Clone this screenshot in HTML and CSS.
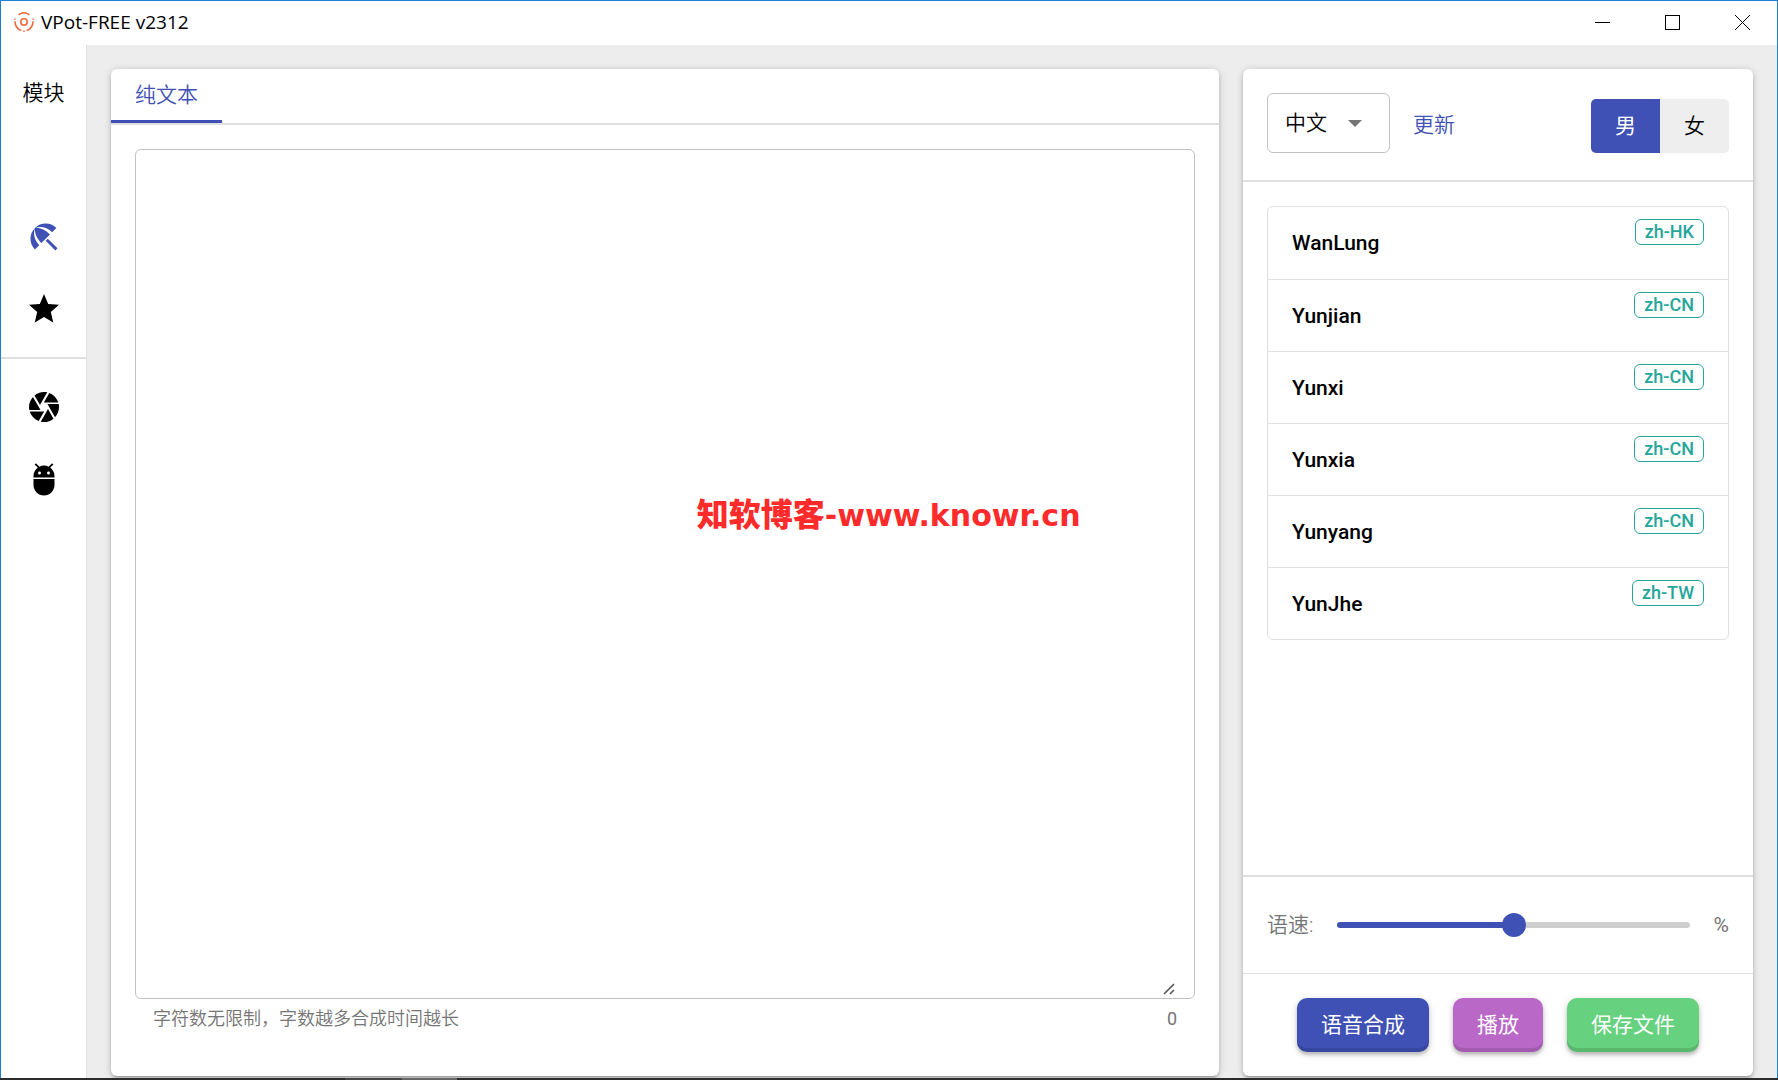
FILE: index.html
```html
<!DOCTYPE html>
<html lang="zh-CN">
<head>
  <meta charset="utf-8">
  <title>VPot-FREE v2312</title>
  <link rel="stylesheet" href="styles.css">
</head>
<body>
  <div class="window">
    <header class="titlebar">
      <svg class="logo" viewBox="0 0 20 20" aria-hidden="true">
        <circle cx="10" cy="10" r="3.2"/>
        <path d="M4.6 2.8A9 9 0 0 1 15.4 2.8M18.9 9.2A9 9 0 0 1 12.6 18.6M1.1 9.2A9 9 0 0 0 7.4 18.6"/>
        <path d="M.9 6.4v1.4M19.1 6.4v1.4M9.3 19.2h1.4"/>
      </svg>
      <h1 class="title">VPot-FREE v2312</h1>
      <div class="window-controls">
        <button class="window-button" type="button" aria-label="最小化">
          <svg viewBox="0 0 15 15"><path d="M0 7.5h15" shape-rendering="crispEdges"/></svg>
        </button>
        <button class="window-button" type="button" aria-label="最大化">
          <svg viewBox="0 0 15 15"><path d="M.5 .5h14v14h-14z" shape-rendering="crispEdges"/></svg>
        </button>
        <button class="window-button" type="button" aria-label="关闭">
          <svg viewBox="0 0 15 15"><path d="M0 0l15 15M15 0L0 15"/></svg>
        </button>
      </div>
    </header>

    <div class="body">
      <nav class="sidebar" aria-label="模块">
        <p class="sidebar-title">模块</p>
        <div class="nav-group">
          <button class="nav-item nav-item-active" type="button" aria-label="文本">
            <svg viewBox="0 0 24 24"><path d="M13.127 14.56l1.43-1.43 6.44 6.443L19.57 21zm4.293-5.73l2.86-2.86c-3.95-3.95-10.35-3.96-14.3-.02 3.93-1.3 8.31-.25 11.44 2.88zM5.95 5.98c-3.94 3.95-3.93 10.35.02 14.3l2.86-2.86C5.7 14.29 4.65 9.91 5.95 5.98zm.02-.02l-.01.01c-.38 3.01 1.17 6.88 4.3 10.02l5.73-5.73c-3.13-3.13-7.01-4.68-10.02-4.3z"/></svg>
          </button>
          <button class="nav-item" type="button" aria-label="收藏">
            <svg viewBox="0 0 24 24"><path d="M12 17.27L18.18 21l-1.64-7.03L22 9.24l-7.19-.61L12 2 9.19 8.63 2 9.24l5.46 4.73L5.82 21z"/></svg>
          </button>
        </div>
        <div class="nav-group nav-group-ruled">
          <button class="nav-item" type="button" aria-label="相机">
            <svg viewBox="0 0 24 24"><path d="M9.4 10.5l4.77-8.26C13.47 2.09 12.75 2 12 2c-2.4 0-4.6.85-6.32 2.25l3.66 6.35.06-.1zM21.54 9c-.92-2.92-3.15-5.26-6-6.34L11.88 9h9.66zm.26 1h-7.49l.29.5 4.76 8.25C21 16.97 22 14.61 22 12c0-.69-.07-1.35-.2-2zM8.54 12l-3.9-6.75C3.01 7.03 2 9.39 2 12c0 .69.07 1.35.2 2h7.49l-1.15-2zm-6.08 3c.92 2.92 3.15 5.26 6 6.34L12.12 15H2.46zm11.27 0l-3.9 6.76c.7.15 1.42.24 2.17.24 2.4 0 4.6-.85 6.32-2.25l-3.66-6.35-.93 1.6z"/></svg>
          </button>
          <button class="nav-item" type="button" aria-label="调试">
            <svg viewBox="0 0 24 24"><path d="M5 16c0 3.87 3.13 7 7 7s7-3.13 7-7v-4H5v4zM16.12 4.37l2.1-2.1-.82-.83-2.3 2.31C14.16 3.28 13.12 3 12 3s-2.16.28-3.09.75L6.6 1.44l-.82.83 2.1 2.1C6.14 5.64 5 7.68 5 10v1h14v-1c0-2.32-1.14-4.36-2.88-5.63zM9 9c-.55 0-1-.45-1-1s.45-1 1-1 1 .45 1 1-.45 1-1 1zm6 0c-.55 0-1-.45-1-1s.45-1 1-1 1 .45 1 1-.45 1-1 1z"/></svg>
          </button>
        </div>
      </nav>

      <main class="content">
        <section class="card">
          <div class="tabs" role="tablist">
            <button class="tab" type="button" role="tab" aria-selected="true">纯文本</button>
          </div>
          <div class="tab-panel" role="tabpanel">
            <div class="editor">
              <textarea class="editor-input" aria-label="纯文本" aria-describedby="editor-hint"></textarea>
              <div class="watermark"><span class="watermark-name">知软博客</span>-www.knowr.cn</div>
            </div>
            <div class="editor-footer">
              <span id="editor-hint">字符数无限制，字数越多合成时间越长</span>
              <span>0</span>
            </div>
          </div>
        </section>

        <section class="card">
          <div class="voice-header">
            <div class="select-field">
              <select class="language" aria-label="语言">
                <option>中文</option>
              </select>
              <svg class="select-arrow" viewBox="0 0 14 7" aria-hidden="true"><path d="M0 0h14L7 7z"/></svg>
            </div>
            <button class="refresh" type="button">更新</button>
            <div class="gender" role="group" aria-label="性别">
              <button class="gender-button gender-button-active" type="button" aria-pressed="true">男</button>
              <button class="gender-button" type="button" aria-pressed="false">女</button>
            </div>
          </div>

          <div class="voice-body">
            <ul class="voices">
              <li class="voice"><span class="voice-name">WanLung</span><span class="badge">zh-HK</span></li>
              <li class="voice"><span class="voice-name">Yunjian</span><span class="badge">zh-CN</span></li>
              <li class="voice"><span class="voice-name">Yunxi</span><span class="badge">zh-CN</span></li>
              <li class="voice"><span class="voice-name">Yunxia</span><span class="badge">zh-CN</span></li>
              <li class="voice"><span class="voice-name">Yunyang</span><span class="badge">zh-CN</span></li>
              <li class="voice"><span class="voice-name">YunJhe</span><span class="badge">zh-TW</span></li>
            </ul>
          </div>

          <div class="speed">
            <label for="speed">语速:</label>
            <input class="slider" id="speed" type="range" min="-100" max="100" value="0">
            <span>%</span>
          </div>

          <div class="actions">
            <button class="action action-primary" type="button">语音合成</button>
            <button class="action action-play" type="button">播放</button>
            <button class="action action-save" type="button">保存文件</button>
          </div>
        </section>
      </main>
    </div>
  </div>
  <div class="taskbar"></div>
</body>
</html>
```

FILE: styles.css
```css
:root {
  --primary: #3f51b5;
  --teal: #26a69a;
  --line: #e0e0e0;
  --muted: #757575;
  --surface: #ededed;
  --space: 24px;
}

* {
  box-sizing: border-box;
}

body {
  display: flex;
  flex-direction: column;
  height: 100vh;
  margin: 0;
  color: #000;
  font: 350 21px/32px Roboto, "Noto Sans CJK SC", sans-serif;
}

button,
select,
textarea {
  margin: 0;
  padding: 0;
  border: 0;
  background: none;
  color: inherit;
  font: inherit;
}

.window {
  display: flex;
  flex: 1;
  flex-direction: column;
  min-height: 0;
  border: 1px solid #1a80d9;
  border-bottom: 0;
  background: #fff;
}

.taskbar {
  flex: none;
  height: 2px;
  background: linear-gradient(90deg, #2b2b2b 345px, #444 345px 402px, #666 402px 457px, #2b2b2b 457px);
}

/* Title bar */

.titlebar {
  display: flex;
  flex: none;
  align-items: center;
  height: 44px;
  padding: 0 0 2px 13px;
}

.logo {
  width: 20px;
  height: 20px;
  fill: none;
  stroke: #f4683c;
  stroke-width: 1.6;
}

.title {
  margin: 0 0 0 7px;
  font: 400 19px/24px "Open Sans", "Noto Sans", sans-serif;
}

.window-controls {
  display: flex;
  margin-left: auto;
}

.window-button {
  display: grid;
  place-items: center;
  width: 70px;
  height: 42px;
}

.window-button svg {
  width: 15px;
  height: 15px;
  fill: none;
  stroke: #000;
}

/* Sidebar */

.body {
  display: flex;
  flex: 1;
  min-height: 0;
}

.sidebar {
  flex: none;
  width: 86px;
  border-right: 1px solid var(--line);
}

.sidebar-title {
  height: 144px;
  margin: 0;
  padding-top: 32px;
  text-align: center;
}

.nav-group {
  padding: 12px 0;
}

.nav-group-ruled {
  border-top: 2px solid var(--line);
}

.nav-item {
  display: grid;
  place-items: center;
  width: 100%;
  height: 72px;
}

.nav-item svg {
  width: 36px;
  height: 36px;
  fill: currentColor;
}

.nav-item-active {
  color: var(--primary);
}

/* Cards */

.content {
  display: grid;
  flex: 1;
  grid-template-columns: minmax(0, 1108fr) minmax(0, 510fr);
  gap: var(--space);
  padding: var(--space) var(--space) 2px;
  overflow: hidden;
  background: var(--surface);
}

.card {
  display: flex;
  flex-direction: column;
  min-height: 0;
  border-radius: 6px;
  background: #fff;
  box-shadow: 0 1px 7px rgba(0, 0, 0, .2), 0 3px 3px rgba(0, 0, 0, .14), 0 4px 1px -3px rgba(0, 0, 0, .12);
}

.tabs {
  display: flex;
  border-bottom: 2px solid var(--line);
}

.tab {
  height: 54px;
  padding: 0 var(--space);
  border-bottom: 3px solid var(--primary);
  color: var(--primary);
}

.tab-panel {
  display: flex;
  flex: 1;
  flex-direction: column;
  min-height: 0;
  padding: var(--space) var(--space) 45px;
}

.editor {
  position: relative;
  display: flex;
  flex: 1;
  min-height: 0;
  padding: 3px 18px;
  border: 1px solid #c2c2c2;
  border-radius: 6px;
}

.editor-input {
  flex: 1;
  height: 100%;
  outline: 0;
  resize: vertical;
}

.editor-input::-webkit-resizer {
  background: url("data:image/svg+xml,%3Csvg xmlns='http://www.w3.org/2000/svg' width='15' height='15'%3E%3Cpath d='M3 14L13 4M9 14l4-4' stroke='%23555' stroke-width='1.6'/%3E%3C/svg%3E") no-repeat;
}

.watermark {
  position: absolute;
  top: 41%;
  left: 53%;
  color: #ff2a2a;
  font: 700 30px/28px "DejaVu Sans", sans-serif;
  white-space: nowrap;
}

.watermark-name {
  font: 900 32px/28px "Noto Sans CJK SC", sans-serif;
}

.editor-footer {
  display: flex;
  justify-content: space-between;
  padding: 8px 18px 0;
  color: var(--muted);
  font-size: 18px;
  line-height: 24px;
}

.editor-footer span:last-child {
  font-weight: 400;
}

/* Voice panel */

.voice-header {
  display: flex;
  align-items: flex-end;
  padding: var(--space) var(--space) 27px;
  border-bottom: 2px solid var(--line);
}

.select-field {
  display: grid;
  align-items: center;
  width: 123px;
}

.language {
  grid-area: 1 / 1;
  width: 100%;
  height: 60px;
  padding: 0 17px;
  border: 1px solid #c2c2c2;
  border-radius: 6px;
  appearance: none;
}

.select-arrow {
  grid-area: 1 / 1;
  justify-self: end;
  width: 14px;
  height: 7px;
  margin-right: 28px;
  fill: var(--muted);
  pointer-events: none;
}

.refresh {
  height: 56px;
  margin-left: 23px;
  color: var(--primary);
}

.gender {
  display: flex;
  margin-left: auto;
  overflow: hidden;
  border-radius: 5px;
  background: #eee;
}

.gender-button {
  width: 69px;
  height: 54px;
}

.gender-button-active {
  background: var(--primary);
  color: #fff;
  font-weight: 400;
}

.voice-body {
  flex: 1;
  min-height: 0;
  padding: var(--space);
  overflow: auto;
}

.voices {
  margin: 0;
  padding: 0;
  border: 1px solid var(--line);
  border-radius: 6px;
  list-style: none;
}

.voice {
  display: flex;
  align-items: flex-start;
  justify-content: space-between;
  height: 72px;
  padding: 12px var(--space);
}

.voice + .voice {
  border-top: 1px solid var(--line);
}

.voice-name {
  align-self: center;
  font-weight: 500;
}

.badge {
  height: 26px;
  padding: 0 9px;
  border: 1px solid var(--teal);
  border-radius: 6px;
  color: var(--teal);
  font-size: 18px;
  font-weight: 500;
  line-height: 24px;
}

.speed {
  display: flex;
  align-items: center;
  gap: var(--space);
  height: 98px;
  padding: 0 var(--space);
  border-top: 2px solid var(--line);
  color: var(--muted);
}

.speed span {
  font-weight: 400;
}

.slider {
  flex: 1;
  min-width: 0;
  height: 24px;
  margin: 0;
  background: none;
  appearance: none;
}

.slider::-webkit-slider-runnable-track {
  height: 6px;
  border-radius: 3px;
  background: linear-gradient(90deg, var(--primary) 50%, #cecece 50%);
}

.slider::-webkit-slider-thumb {
  width: 24px;
  height: 24px;
  margin-top: -9px;
  border-radius: 50%;
  background: var(--primary);
  appearance: none;
}

.actions {
  display: flex;
  justify-content: center;
  gap: var(--space);
  padding: var(--space);
  border-top: 1px solid var(--line);
}

.action {
  height: 54px;
  padding: 0 var(--space);
  border-radius: 10px;
  color: #fff;
  font-weight: 400;
  box-shadow: inset 0 -4px rgba(0, 0, 0, .12), 0 2px 7px rgba(0, 0, 0, .2), 0 3px 3px rgba(0, 0, 0, .14);
}

.action-primary {
  background-color: var(--primary);
}

.action-play {
  background-color: #ba68c8;
}

.action-save {
  background-color: #66d17e;
}
```
